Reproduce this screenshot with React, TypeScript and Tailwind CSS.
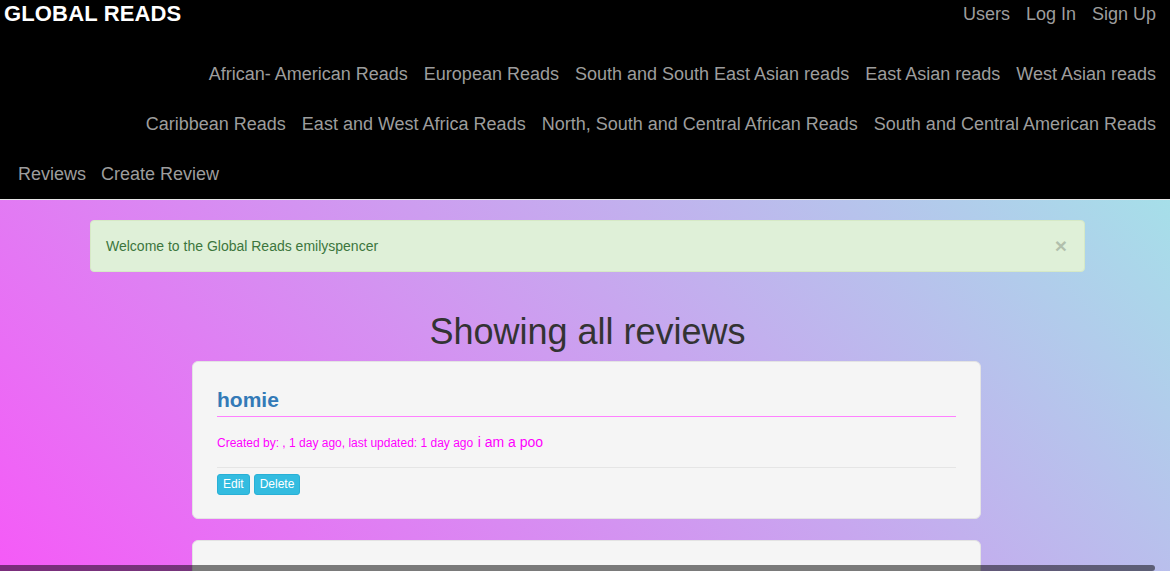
const NAV_ROW_1 = [
  "African- American Reads",
  "European Reads",
  "South and South East Asian reads",
  "East Asian reads",
  "West Asian reads",
];

const NAV_ROW_2 = [
  "Caribbean Reads",
  "East and West Africa Reads",
  "North, South and Central African Reads",
  "South and Central American Reads",
];

function NavLink({ label }: { label: string }) {
  return <a className="cursor-pointer text-[18px] leading-[20px] text-[#9d9d9d]">{label}</a>;
}

function ReviewCard() {
  return (
    <div className="w-[789px] rounded-[6px] border border-[#e3e3e3] bg-[#f5f5f5] px-[24px] pt-[26px] pb-[23px]">
      {/* title */}
      <h3 className="border-b border-[#ff80ff] pb-[4px] text-[21px] leading-[24px] font-bold text-[#337ab7]">
        homie
      </h3>
      <p className="mt-[15px] leading-[20px] text-[#ff00ff]">
        <span className="text-[12px]">Created by: , 1 day ago, last updated: 1 day ago</span>{" "}
        <span className="text-[14px]">i am a poo</span>
      </p>
      <div className="mt-[14px] h-px bg-[#e5e5e5]" />
      <div className="mt-[6px] flex gap-[4px]">
        <button className="h-[21px] rounded-[3px] border border-[#29b0d6] bg-[#33bce0] px-[5px] text-[12px] leading-[19px] text-white">
          Edit
        </button>
        <button className="h-[21px] rounded-[3px] border border-[#29b0d6] bg-[#33bce0] px-[5px] text-[12px] leading-[19px] text-white">
          Delete
        </button>
      </div>
    </div>
  );
}

export default function App() {
  return (
    <div className="relative h-[571px] overflow-hidden font-['Liberation_Sans',Arial,sans-serif]">
      {/* === navbar === */}
      <nav className="border-b border-[#e6e6e6] bg-black">
        <div className="flex h-[28px] items-center justify-between pr-[14px] pl-[4px]">
          <span className="text-[22px] leading-[24px] font-bold tracking-[0.15px] text-white">GLOBAL READS</span>
          <div className="flex gap-[16px]">
            <NavLink label="Users" />
            <NavLink label="Log In" />
            <NavLink label="Sign Up" />
          </div>
        </div>
        <div className="mt-[21px] flex h-[50px] items-center justify-end gap-[16px] pr-[14px]">
          {NAV_ROW_1.map((l) => (
            <NavLink key={l} label={l} />
          ))}
        </div>
        <div className="flex h-[50px] items-center justify-end gap-[16px] pr-[14px]">
          {NAV_ROW_2.map((l) => (
            <NavLink key={l} label={l} />
          ))}
        </div>
        <div className="flex h-[50px] items-center gap-[15px] pl-[18px]">
          <NavLink label="Reviews" />
          <NavLink label="Create Review" />
        </div>
      </nav>

      {/* === body === */}
      <main className="h-[371px] overflow-hidden bg-[linear-gradient(45deg,#f55af7,#a6dfe9)]">
        <div className="ml-[90px] w-[995px] pt-[20px]">
          <div className="flex items-center justify-between rounded-[4px] border border-[#d6e9c6] bg-[#dff0d8] py-[15px] pr-[17px] pl-[15px] text-[14px] leading-[20px] text-[#3c763d]">
            <span>Welcome to the Global Reads emilyspencer</span>
            <span className="text-[21px] leading-[20px] font-bold text-black opacity-20">×</span>
          </div>

          <h1 className="mt-[40px] text-center text-[36px] leading-[40px] text-[#333]">Showing all reviews</h1>

          <div className="mt-[9px] ml-[102px] flex flex-col gap-[21px]">
            <ReviewCard />
            <div className="h-[100px] w-[789px] rounded-[6px] border border-[#e3e3e3] bg-[#f5f5f5]" />
          </div>
        </div>
      </main>

      {/* overlay scrollbar */}
      <div className="absolute bottom-0 left-0 h-[6px] w-[1155px] rounded-r-[3px] bg-black/50" />
    </div>
  );
}
